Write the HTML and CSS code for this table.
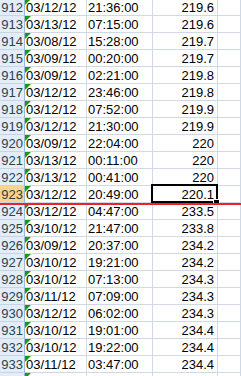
FILE: index.html
```html
<!DOCTYPE html>
<html>
<head>
<meta charset="utf-8">
<link rel="stylesheet" href="styles.css">
</head>
<body>
<div class="sheet">
  <div class="row"><div class="hd">912</div><div class="c dt">03/12/12</div><div class="c">21:36:00</div><div class="c num">219.6</div><div class="c"></div></div>
  <div class="row"><div class="hd">913</div><div class="c dt">03/13/12</div><div class="c">07:15:00</div><div class="c num">219.6</div><div class="c"></div></div>
  <div class="row"><div class="hd">914</div><div class="c dt">03/08/12</div><div class="c">15:28:00</div><div class="c num">219.7</div><div class="c"></div></div>
  <div class="row"><div class="hd">915</div><div class="c dt">03/09/12</div><div class="c">00:20:00</div><div class="c num">219.7</div><div class="c"></div></div>
  <div class="row"><div class="hd">916</div><div class="c dt">03/09/12</div><div class="c">02:21:00</div><div class="c num">219.8</div><div class="c"></div></div>
  <div class="row"><div class="hd">917</div><div class="c dt">03/12/12</div><div class="c">23:46:00</div><div class="c num">219.8</div><div class="c"></div></div>
  <div class="row"><div class="hd">918</div><div class="c dt">03/12/12</div><div class="c">07:52:00</div><div class="c num">219.9</div><div class="c"></div></div>
  <div class="row"><div class="hd">919</div><div class="c dt">03/12/12</div><div class="c">21:30:00</div><div class="c num">219.9</div><div class="c"></div></div>
  <div class="row"><div class="hd">920</div><div class="c dt">03/09/12</div><div class="c">22:04:00</div><div class="c num">220</div><div class="c"></div></div>
  <div class="row"><div class="hd">921</div><div class="c dt">03/13/12</div><div class="c">00:11:00</div><div class="c num">220</div><div class="c"></div></div>
  <div class="row"><div class="hd">922</div><div class="c dt">03/13/12</div><div class="c">00:41:00</div><div class="c num">220</div><div class="c"></div></div>
  <div class="row"><div class="hd sel">923</div><div class="c dt">03/12/12</div><div class="c">20:49:00</div><div class="c num active">220.1<span class="handle"></span></div><div class="c"></div></div>
  <div class="row"><div class="hd">924</div><div class="c dt">03/12/12</div><div class="c">04:47:00</div><div class="c num">233.5</div><div class="c"></div></div>
  <div class="row"><div class="hd">925</div><div class="c dt">03/10/12</div><div class="c">21:47:00</div><div class="c num">233.8</div><div class="c"></div></div>
  <div class="row"><div class="hd">926</div><div class="c dt">03/09/12</div><div class="c">20:37:00</div><div class="c num">234.2</div><div class="c"></div></div>
  <div class="row"><div class="hd">927</div><div class="c dt">03/10/12</div><div class="c">19:21:00</div><div class="c num">234.2</div><div class="c"></div></div>
  <div class="row"><div class="hd">928</div><div class="c dt">03/10/12</div><div class="c">07:13:00</div><div class="c num">234.3</div><div class="c"></div></div>
  <div class="row"><div class="hd">929</div><div class="c dt">03/11/12</div><div class="c">07:09:00</div><div class="c num">234.3</div><div class="c"></div></div>
  <div class="row"><div class="hd">930</div><div class="c dt">03/12/12</div><div class="c">06:02:00</div><div class="c num">234.3</div><div class="c"></div></div>
  <div class="row"><div class="hd">931</div><div class="c dt">03/10/12</div><div class="c">19:01:00</div><div class="c num">234.4</div><div class="c"></div></div>
  <div class="row"><div class="hd">932</div><div class="c dt">03/10/12</div><div class="c">19:22:00</div><div class="c num">234.4</div><div class="c"></div></div>
  <div class="row"><div class="hd">933</div><div class="c dt">03/11/12</div><div class="c">03:47:00</div><div class="c num">234.4</div><div class="c"></div></div>
  <div class="row"><div class="hd"></div><div class="c dt"></div><div class="c"></div><div class="c num"></div><div class="c"></div></div>
  <div class="redline"></div>
</div>
</body>
</html>
```
FILE: styles.css
```css
html, body {
  margin: 0;
  padding: 0;
  background: #ffffff;
  overflow: hidden;
}
body {
  width: 241px;
  height: 376px;
}
.sheet {
  position: relative;
  margin-top: -1px;
  font-family: "Liberation Sans", Arial, sans-serif;
  font-size: 13px;
  color: #000;
}
.row {
  display: grid;
  grid-template-columns: 25px 62px 66px 65px 1fr;
  height: 17px;
}
.row > div {
  box-sizing: border-box;
  height: 17px;
  padding-top: 1px;
  line-height: 16px;
  white-space: nowrap;
  overflow: visible;
}
.hd {
  background: #e4ecf7;
  color: #27434f;
  text-align: right;
  padding-right: 1px;
  border-right: 1px solid #9eb6ce;
  border-bottom: 1px solid #c5d4e6;
}
.hd.sel {
  background: #fbd38e;
  color: #2b3e4a;
}
.c {
  border-right: 1px solid #d0d7e5;
  border-bottom: 1px solid #d0d7e5;
  padding-left: 1px;
  position: relative;
}
.num {
  text-align: right;
  padding-right: 3px;
}
.dt::before {
  content: "";
  position: absolute;
  left: 0;
  top: 0;
  width: 0;
  height: 0;
  border-top: 6px solid #169b16;
  border-right: 6px solid transparent;
}
.active::after {
  content: "";
  position: absolute;
  left: -2px;
  top: -2px;
  right: -1px;
  bottom: -1px;
  border: 2px solid #000;
}
.handle {
  position: absolute;
  right: -3px;
  bottom: -4px;
  width: 5px;
  height: 5px;
  background: #000;
  border: 1px solid #fff;
  z-index: 2;
}
.redline {
  position: absolute;
  left: 0;
  right: 0;
  top: 204px;
  height: 2px;
  background: #e8232b;
  z-index: 3;
}
```
